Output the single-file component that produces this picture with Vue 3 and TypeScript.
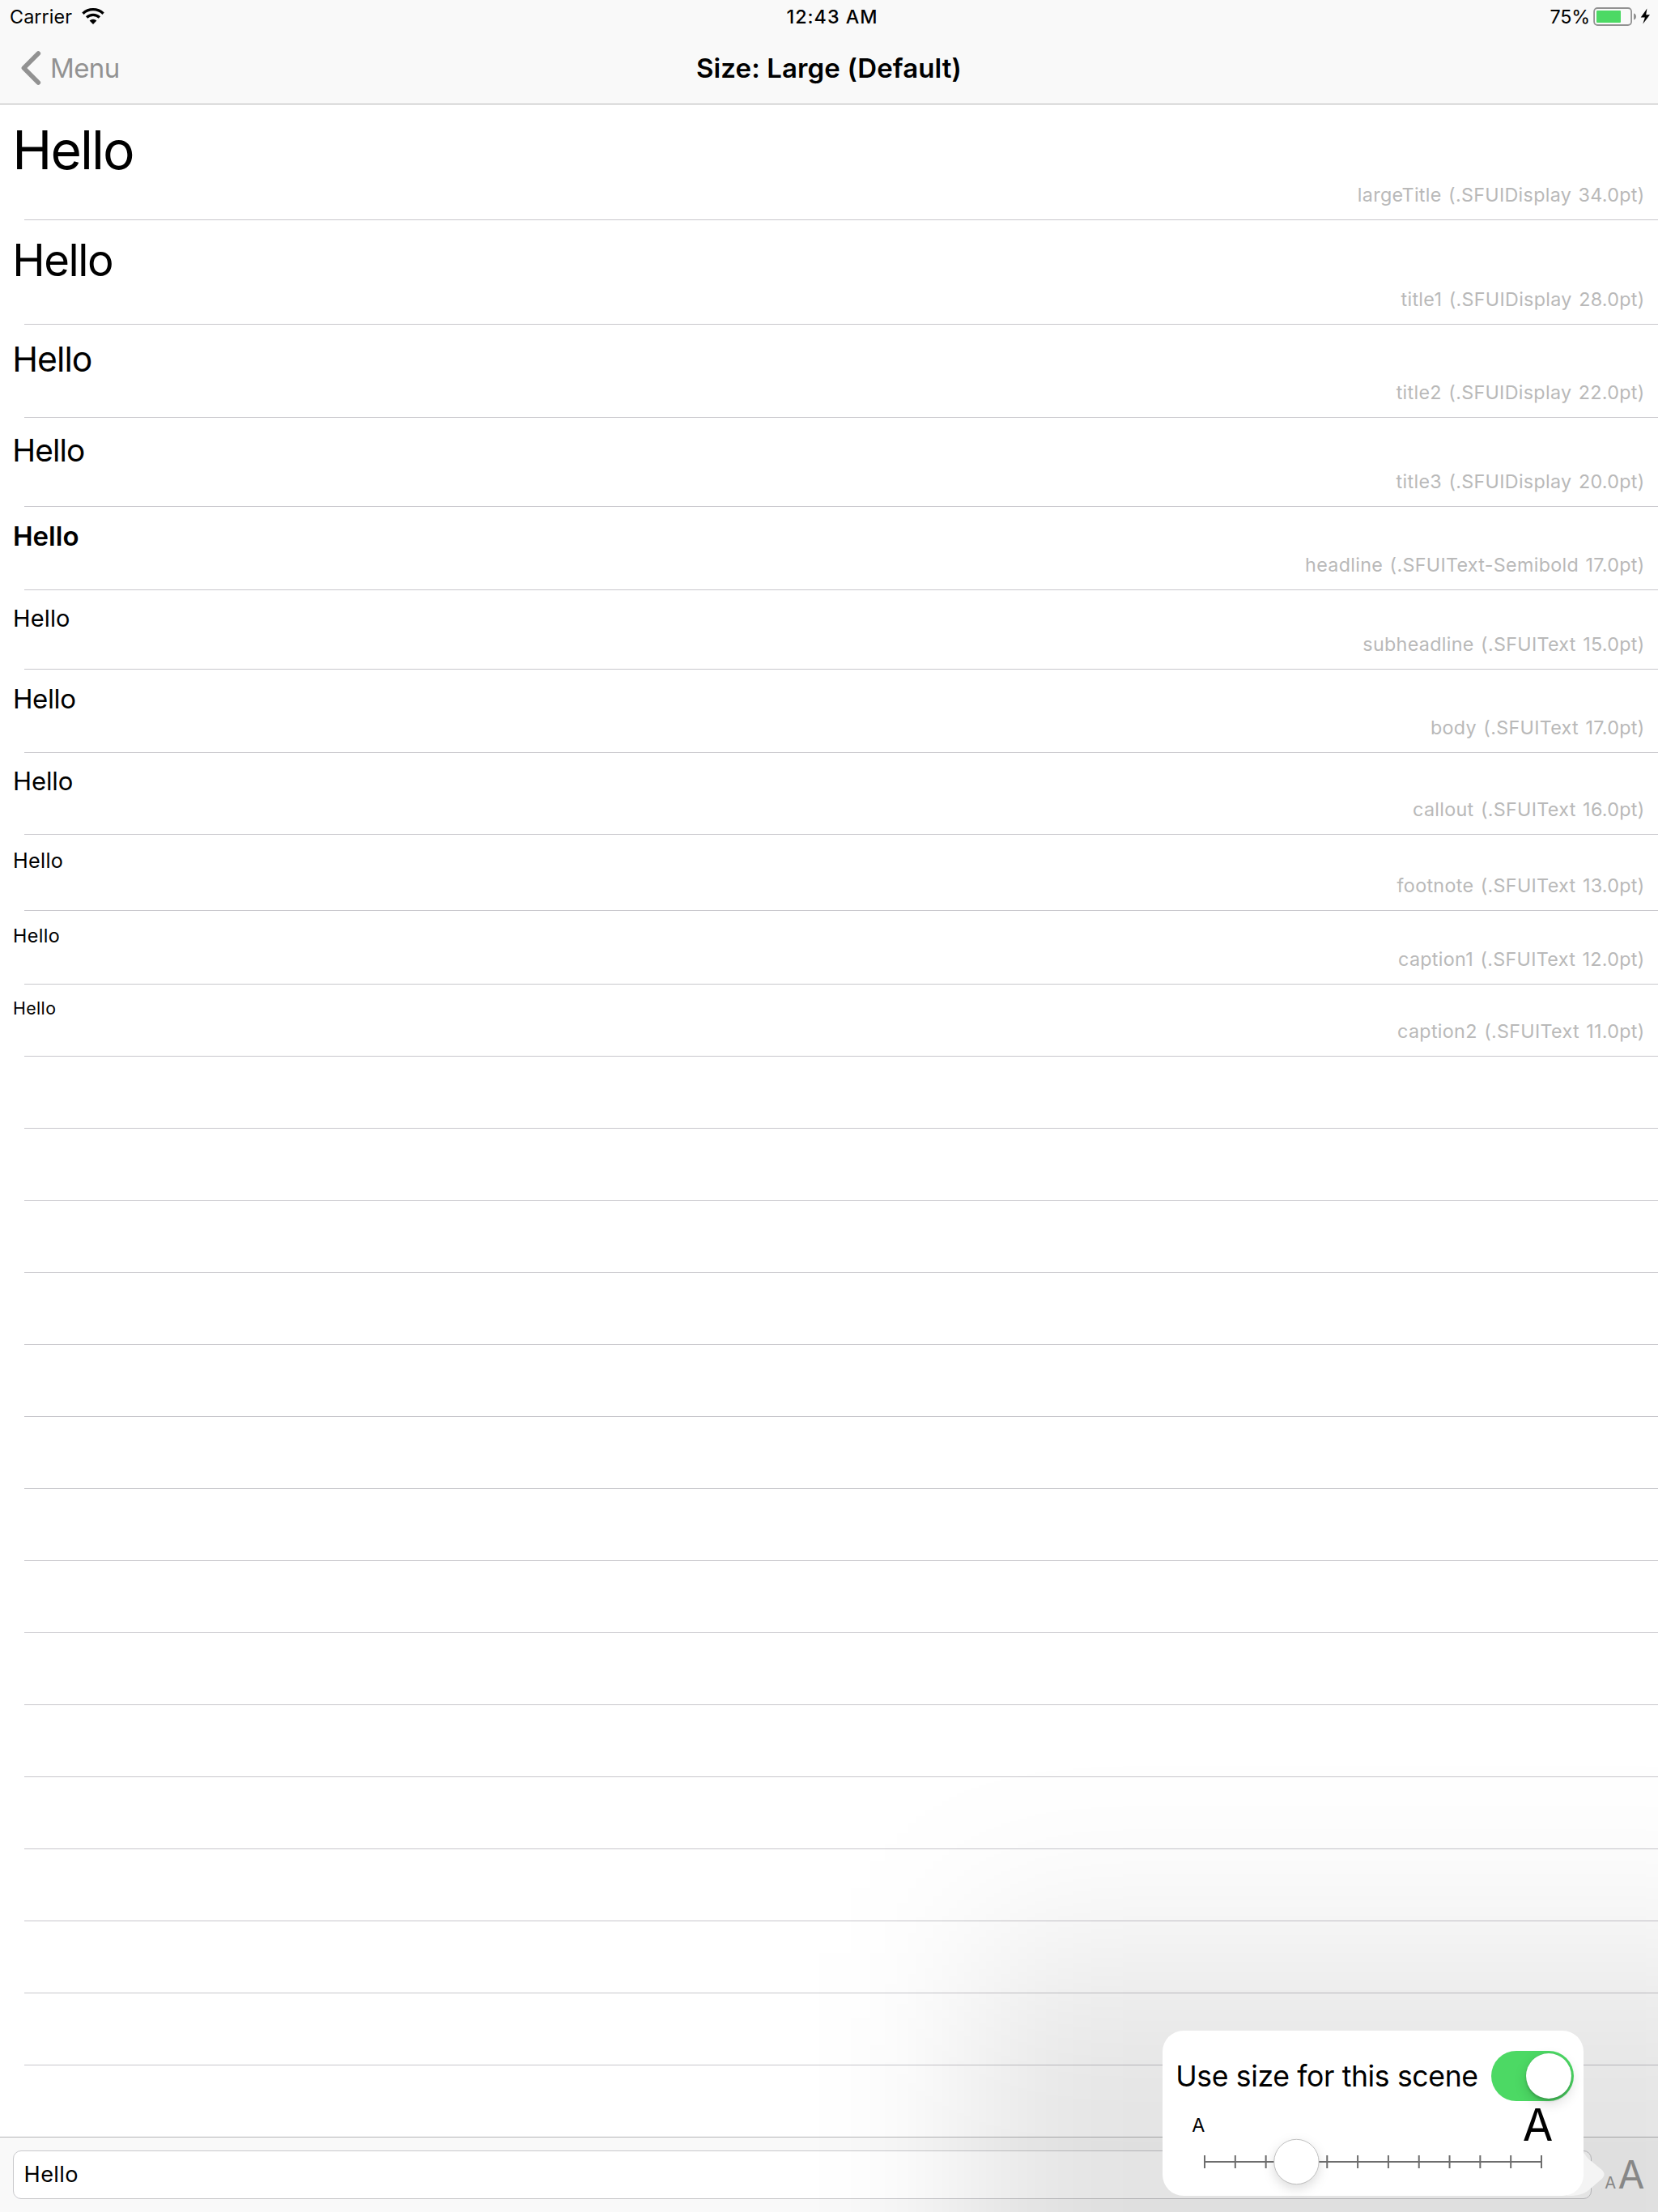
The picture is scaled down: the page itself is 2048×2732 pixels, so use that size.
<script setup lang="ts">
interface StyleRow {
  name: string
  font: string
  height: number
  size: number
  top: number
  spacing: number
  left?: number
  bold?: boolean
}

const rows: StyleRow[] = [
  { name: 'largeTitle', font: '.SFUIDisplay 34.0pt', height: 143, size: 66, top: 16, spacing: -1.95, left: 15.3 },
  { name: 'title1', font: '.SFUIDisplay 28.0pt', height: 129, size: 54.4, top: 16, spacing: -1.45, left: 15.3 },
  { name: 'title2', font: '.SFUIDisplay 22.0pt', height: 115, size: 42.7, top: 17, spacing: -0.95, left: 15.3 },
  { name: 'title3', font: '.SFUIDisplay 20.0pt', height: 110, size: 38.8, top: 16, spacing: -0.9, left: 15.3 },
  { name: 'headline', font: '.SFUIText-Semibold 17.0pt', height: 103, size: 33, top: 16, spacing: 0, bold: true },
  { name: 'subheadline', font: '.SFUIText 15.0pt', height: 98, size: 29, top: 17, spacing: 0.15 },
  { name: 'body', font: '.SFUIText 17.0pt', height: 103, size: 33, top: 16, spacing: -0.4 },
  { name: 'callout', font: '.SFUIText 16.0pt', height: 101, size: 31, top: 16, spacing: -0.1 },
  { name: 'footnote', font: '.SFUIText 13.0pt', height: 94, size: 25.2, top: 17, spacing: 0.3 },
  { name: 'caption1', font: '.SFUIText 12.0pt', height: 91, size: 23.3, top: 16, spacing: 0.4 },
  { name: 'caption2', font: '.SFUIText 11.0pt', height: 89, size: 21.3, top: 16, spacing: 0.4 },
]

const emptyRows = 14
const tickXs = Array.from({ length: 12 }, (_, i) => 52 + (i * 416) / 11)
const sample = 'Hello'
</script>

<template>
  <div class="screen">
    <header class="header">
      <div class="status">
        <div class="status-left">
          <span class="carrier">Carrier</span>
          <svg class="wifi" width="28" height="20" viewBox="0 0 28 20">
            <path d="M1.4 6.7A18.3 18.3 0 0 1 26.6 6.7M6.1 11.5A11.6 11.6 0 0 1 21.9 11.5" fill="none" stroke="#000" stroke-width="3.3" />
            <path d="M14 20L9.6 15.4A6.4 6.4 0 0 1 18.4 15.4Z" />
          </svg>
        </div>
        <span class="clock">12:43 AM</span>
        <div class="status-right">
          <span class="percent">75%</span>
          <svg class="battery" width="70" height="23" viewBox="0 0 70 23">
            <rect x="1.1" y="1" width="46" height="21" rx="4.2" fill="none" stroke="#929292" stroke-width="1.8" />
            <rect x="4" y="4" width="30" height="15" rx="1" fill="#4cd964" />
            <path d="M50 7.5C54 8 54 15 50 15.5Z" fill="#929292" />
            <path d="M66.4 1.6L58.7 12.6H63.9L61.3 20.6L70 9.3H65.2Z" />
          </svg>
        </div>
      </div>
      <div class="nav">
        <div class="back">
          <svg width="25" height="42" viewBox="0 0 25 42">
            <path d="M21.3 3L3.4 21L21.3 39" fill="none" stroke="#929292" stroke-width="5.6" stroke-linecap="round" stroke-linejoin="round" />
          </svg>
          <span class="back-label">Menu</span>
        </div>
        <h1 class="title">Size: Large (Default)</h1>
        <div></div>
      </div>
    </header>

    <main class="list">
      <div v-for="row in rows" :key="row.name" class="row" :style="{ height: row.height + 'px' }">
        <span
          class="sample"
          :class="{ bold: row.bold }"
          :style="{
            fontSize: row.size + 'px',
            letterSpacing: row.spacing + 'px',
            marginTop: row.top + 'px',
            marginLeft: (row.left ?? 16) + 'px',
          }"
        >{{ sample }}</span>
        <span class="detail">{{ row.name }} ({{ row.font }})</span>
      </div>
      <div v-for="n in emptyRows" :key="n" class="row empty"></div>
    </main>

    <footer class="toolbar">
      <div class="field">{{ sample }}</div>
      <div class="size-button"><span class="small-a">A</span><span class="large-a">A</span></div>
    </footer>

    <svg class="shade" width="2048" height="2732" viewBox="0 0 2048 2732">
      <defs>
        <filter id="shade-blur" filterUnits="userSpaceOnUse" x="700" y="1900" width="1900" height="1600">
          <feGaussianBlur stdDeviation="98 120" />
        </filter>
      </defs>
      <rect x="1200" y="2412" width="1020" height="630" fill="#000" fill-opacity="0.105" filter="url(#shade-blur)" />
    </svg>

    <div class="popover">
      <svg class="arrow" width="46" height="66" viewBox="0 0 46 66">
        <path d="M10 0V9.500C15 9.500 20.500 12 22 15C24 19 27 21.500 30 23.500L40 31.700C47.500 37.500 47.500 41.500 40 47.300L27 58.500C20 64 14 66 2 66H0V0Z" fill="#f4f4f4" />
      </svg>
      <div class="card">
        <div class="switch-row">
          <span class="switch-label">Use size for this scene</span>
          <div class="switch"><div class="knob"></div></div>
        </div>
        <div class="scale">
          <span class="scale-small">A</span>
          <span class="scale-large">A</span>
        </div>
        <svg class="slider" width="520" height="56" viewBox="0 0 520 56">
          <rect x="51" y="27" width="418" height="2" fill="#6d6d6d" />
          <rect v-for="x in tickXs" :key="x" :x="x - 1" y="20" width="2" height="16" fill="#6d6d6d" />
          <circle class="thumb" cx="165.400" cy="28" r="27.700" fill="#fff" stroke="#b0b0b0" stroke-width="0.800" />
        </svg>
      </div>
    </div>
  </div>
</template>

<style>
body {
  margin: 0;
  background: #fff;
}
</style>

<style scoped>
.screen {
  position: relative;
  display: flex;
  flex-direction: column;
  width: 2048px;
  height: 2732px;
  overflow: hidden;
  background: #fff;
  color: #000;
  font-family: Inter, 'Liberation Sans', sans-serif;
  white-space: nowrap;
}
.header {
  box-sizing: border-box;
  height: 129px;
  background: #f9f9f9;
  border-bottom: 1px solid #b2b2b2;
}
.status {
  display: grid;
  grid-template-columns: 1fr auto 1fr;
  align-items: start;
  height: 40px;
  font-size: 23.3px;
}
.status-left {
  display: flex;
  padding-left: 12px;
}
.carrier {
  margin-top: 6px;
  letter-spacing: 0.12px;
}
.wifi {
  margin: 10px 0 0 11.5px;
}
.clock {
  margin-top: 6px;
  padding-left: 8px;
  font-weight: 500;
  letter-spacing: 1px;
}
.status-right {
  display: flex;
  justify-content: flex-end;
  padding-right: 10px;
}
.percent {
  margin-top: 6px;
  letter-spacing: -0.2px;
}
.battery {
  margin: 9px 0 0 4.2px;
}
.nav {
  display: grid;
  grid-template-columns: 1fr auto 1fr;
  align-items: start;
  height: 88px;
  font-size: 33px;
}
.back {
  display: flex;
  padding: 23px 0 0 26px;
  color: #929292;
}
.back-label {
  margin: 1px 0 0 11px;
  letter-spacing: -0.6px;
}
.title {
  margin: 24px 0 0;
  font-size: 33px;
  font-weight: 570;
  letter-spacing: 0.12px;
}
.list {
  flex: 1;
  min-height: 0;
}
.row {
  box-sizing: border-box;
  display: flex;
  flex-direction: column;
  justify-content: space-between;
  background: linear-gradient(#c8c7cc, #c8c7cc) 30px 100% / 100% 1px no-repeat;
}
.row.empty {
  height: 89px;
}
.sample {
  align-self: flex-start;
}
.bold {
  font-weight: 600;
}
.detail {
  align-self: flex-end;
  margin: 0 16.4px 17px 0;
  font-size: 23.3px;
  letter-spacing: 0.31px;
  word-spacing: 1.6px;
  color: #b9b9b9;
}
.toolbar {
  box-sizing: border-box;
  display: flex;
  align-items: flex-start;
  height: 93px;
  padding-left: 16px;
  background: #f9f9f9;
  border-top: 1px solid #b5b5b7;
}
.field {
  box-sizing: border-box;
  width: 1950px;
  height: 60px;
  margin-top: 16px;
  padding: 12px 12.6px;
  border: 1px solid #c8c8cb;
  border-radius: 10px;
  background: #fff;
  font-size: 27.2px;
  letter-spacing: 0.35px;
}
.size-button {
  display: flex;
  align-items: baseline;
  margin: 17px 0 0 16.2px;
  color: #979797;
}
.small-a {
  font-size: 20.2px;
}
.large-a {
  margin-left: 2.4px;
  font-size: 47.7px;
}
.shade {
  position: absolute;
  inset: 0;
  pointer-events: none;
}
.popover {
  position: absolute;
  left: 1436px;
  top: 2508px;
  width: 520px;
  height: 204px;
}
.arrow {
  position: absolute;
  left: 500px;
  top: 138px;
}
.card {
  position: relative;
  box-sizing: border-box;
  width: 520px;
  height: 204px;
  padding-top: 25px;
  border-radius: 26px;
  background: #fff;
}
.switch-row {
  display: flex;
  align-items: center;
  justify-content: space-between;
  height: 62px;
  padding: 0 12px 0 16.2px;
}
.switch-label {
  font-size: 35.6px;
  letter-spacing: -0.36px;
}
.switch {
  box-sizing: border-box;
  display: flex;
  justify-content: flex-end;
  width: 102px;
  height: 62px;
  padding: 3px;
  border-radius: 31px;
  background: #4cd964;
}
.knob {
  width: 56px;
  height: 56px;
  border-radius: 50%;
  background: #fff;
  box-shadow: 0 6px 16px rgba(0, 0, 0, 0.15), 0 3px 3px rgba(0, 0, 0, 0.16), 0 0 1px rgba(0, 0, 0, 0.2);
}
.scale {
  display: flex;
  align-items: flex-start;
  justify-content: space-between;
  height: 51px;
  margin-top: -4px;
  padding: 0 37.6px 0 36.2px;
}
.scale-small {
  margin-top: 19px;
  font-size: 23.3px;
}
.scale-large {
  font-size: 54.5px;
}
.slider {
  display: block;
  overflow: visible;
}
.thumb {
  filter: drop-shadow(0 5px 7px rgba(0, 0, 0, 0.14));
}
</style>
